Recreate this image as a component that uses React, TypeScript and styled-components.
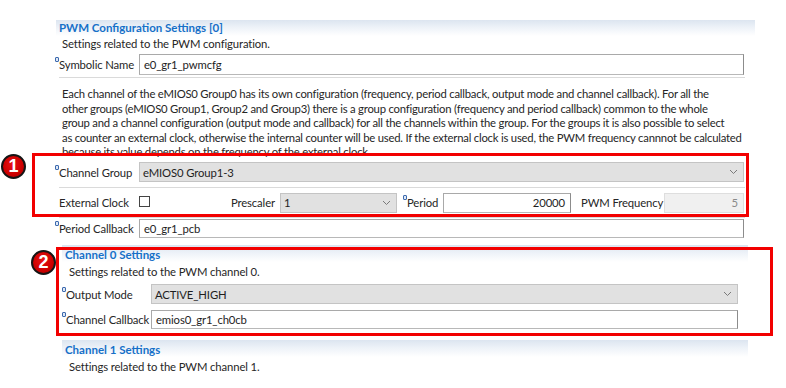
import React from "react";
import styled, { createGlobalStyle } from "styled-components";

const GlobalStyle = createGlobalStyle`
  html, body { margin: 0; padding: 0; background: #ffffff; }
  body {
    font-family: Lato, "Open Sans", sans-serif;
    font-size: 11.3px;
    letter-spacing: -0.12px;
    color: #262626;
  }
`;

const Page = styled.div`
  width: 786px;
  height: 388px;
  overflow: hidden;
  box-sizing: border-box;
  padding: 20px 0 0 56px;
`;

const SectionHeader = styled.div<{ $width: number; $padTop: number; $height: number }>`
  width: ${(p) => p.$width}px;
  height: ${(p) => p.$height}px;
  box-sizing: border-box;
  padding: ${(p) => p.$padTop}px 0 0 3px;
  background: linear-gradient(to bottom, #dce5f0 0%, #edf2f8 45%, #ffffff 100%);
  color: #1670c8;
  font-weight: 700;
  font-size: 11.5px;
  letter-spacing: 0;
  line-height: 13px;
  white-space: nowrap;
`;

const Desc = styled.div<{ $indent: number; $height: number }>`
  padding-left: ${(p) => p.$indent}px;
  height: ${(p) => p.$height}px;
  line-height: ${(p) => p.$height}px;
  white-space: nowrap;
`;

const Row = styled.div<{ $height: number; $sep?: boolean; $width: number; $indent: number }>`
  display: flex;
  align-items: center;
  margin-left: ${(p) => p.$indent}px;
  width: ${(p) => p.$width}px;
  height: ${(p) => p.$height}px;
  border-bottom: ${(p) => (p.$sep ? "1px solid #dadada" : "none")};
`;

const Label = styled.div<{ $width: number }>`
  position: relative;
  flex: 0 0 auto;
  width: ${(p) => p.$width}px;
  white-space: nowrap;
`;

const Marker = styled.span`
  position: absolute;
  left: -4px;
  top: -1px;
  width: 4px;
  height: 5px;
  border: 1px solid #3d6aae;
  border-radius: 1px;
  box-sizing: border-box;
  background: #dfe8f5;
`;

const TextBox = styled.div<{ $width: number; $height: number; $right?: boolean }>`
  flex: 0 0 auto;
  width: ${(p) => p.$width}px;
  height: ${(p) => p.$height}px;
  box-sizing: border-box;
  border: 1px solid #a9a9a9;
  border-right-color: #8c8c8c;
  border-bottom-color: #b8b8b8;
  background: #ffffff;
  color: #1e1e1e;
  display: flex;
  align-items: center;
  justify-content: ${(p) => (p.$right ? "flex-end" : "flex-start")};
  padding: 0 5px 0 4px;
  white-space: nowrap;
`;

const ReadOnlyBox = styled(TextBox)`
  background: #f0f0f0;
  border: 1px solid #dedede;
  color: #8a8a8a;
`;

const SelectBox = styled.div<{ $width: number; $height: number }>`
  flex: 0 0 auto;
  width: ${(p) => p.$width}px;
  height: ${(p) => p.$height}px;
  box-sizing: border-box;
  border: 1px solid #c4c4c4;
  background: #e1e1e1;
  color: #1e1e1e;
  display: flex;
  align-items: center;
  justify-content: space-between;
  padding: 0 5px 0 3px;
  white-space: nowrap;
`;

const Check = styled.div`
  flex: 0 0 auto;
  width: 11px;
  height: 11px;
  box-sizing: border-box;
  border: 1px solid #444444;
  background: #ffffff;
  margin-top: -3px;
`;

const Cell = styled.div<{ $width: number; $align: "left" | "right"; $pad: number }>`
  position: relative;
  flex: 0 0 auto;
  width: ${(p) => p.$width}px;
  box-sizing: border-box;
  text-align: ${(p) => p.$align};
  padding: ${(p) => (p.$align === "right" ? `0 ${p.$pad}px 0 0` : `0 0 0 ${p.$pad}px`)};
  white-space: nowrap;
`;

const InlineMarker = styled.span`
  position: relative;
  display: inline-block;
  width: 0;
  height: 0;
  vertical-align: top;
`;

const Paragraph = styled.div`
  margin: 9px 0 0 6px;
  height: 70px;
  overflow: hidden;
  line-height: 14.5px;
  letter-spacing: -0.22px;
  white-space: nowrap;
`;

const Annotated = styled.div`
  position: relative;
`;

const Frame = styled.div<{ $left: number; $top: number; $width: number; $height: number }>`
  position: absolute;
  left: ${(p) => p.$left}px;
  top: ${(p) => p.$top}px;
  width: ${(p) => p.$width}px;
  height: ${(p) => p.$height}px;
  box-sizing: border-box;
  border: 3px solid #f20000;
  pointer-events: none;
`;

const Badge = styled.div<{ $left: number; $top: number }>`
  position: absolute;
  left: ${(p) => p.$left}px;
  top: ${(p) => p.$top}px;
  width: 25px;
  height: 25px;
  box-sizing: border-box;
  border-radius: 50%;
  border: 2px solid #151515;
  background: radial-gradient(circle at 45% 40%, #e81212 0%, #cc0000 60%, #9a0000 100%);
  color: #ffffff;
  font-family: "Liberation Sans", Arial, sans-serif;
  font-weight: 700;
  font-size: 18px;
  letter-spacing: 0;
  line-height: 21px;
  text-align: center;
`;

const ChannelSection = styled.div<{ $top: number }>`
  position: relative;
  margin: ${(p) => p.$top}px 0 0 6px;
  width: 686px;
`;

const Chevron = () => (
  <svg width="9" height="6" viewBox="0 0 9 6">
    <polyline points="1,1 4.5,4.5 8,1" fill="none" stroke="#7a7a7a" strokeWidth="1" />
  </svg>
);

const MarkedLabel: React.FC<{ width: number; children: React.ReactNode }> = ({ width, children }) => (
  <Label $width={width}>
    <Marker />
    {children}
  </Label>
);

const paragraphLines = [
  "Each channel of the eMIOS0 Group0 has its own configuration (frequency, period callback, output mode and channel callback). For all the",
  "other groups (eMIOS0 Group1, Group2 and Group3) there is a group configuration (frequency and period callback) common to the whole",
  "group and a channel configuration (output mode and callback) for all the channels within the group. For the groups it is also possible to select",
  "as counter an external clock, otherwise the internal counter will be used. If the external clock is used, the PWM frequency cannnot be calculated",
  "because its value depends on the frequency of the external clock.",
];

export default function App() {
  return (
    <>
      <GlobalStyle />
      <Page>
        <SectionHeader $width={699} $height={16} $padTop={1}>
          PWM Configuration Settings [0]
        </SectionHeader>
        <Desc $indent={6} $height={16}>
          Settings related to the PWM configuration.
        </Desc>
        <Row $indent={3} $width={686} $height={25} $sep>
          <MarkedLabel width={80}>Symbolic Name</MarkedLabel>
          <TextBox $width={605} $height={21}>e0_gr1_pwmcfg</TextBox>
        </Row>

        <Paragraph>
          {paragraphLines.map((l) => (
            <div key={l}>{l}</div>
          ))}
        </Paragraph>

        <Annotated>
          <Row $indent={3} $width={686} $height={30} $sep>
            <MarkedLabel width={80}>Channel Group</MarkedLabel>
            <SelectBox $width={605} $height={20}>
              <span>eMIOS0 Group1-3</span>
              <Chevron />
            </SelectBox>
          </Row>
          <Row $indent={3} $width={686} $height={29} $sep>
            <Label $width={80}>External Clock</Label>
            <Check />
            <Cell $width={130} $align="right" $pad={5}>Prescaler</Cell>
            <SelectBox $width={117} $height={20}>
              <span>1</span>
              <Chevron />
            </SelectBox>
            <Cell $width={46} $align="left" $pad={10}>
              <InlineMarker>
                <Marker />
              </InlineMarker>
              Period
            </Cell>
            <TextBox $width={128} $height={20} $right>20000</TextBox>
            <Cell $width={93} $align="left" $pad={10}>PWM Frequency</Cell>
            <ReadOnlyBox $width={80} $height={20} $right>5</ReadOnlyBox>
          </Row>
          <Frame $left={-24} $top={-4} $width={717} $height={64} />
          <Badge $left={-55} $top={-3}>1</Badge>
        </Annotated>

        <Row $indent={3} $width={686} $height={21}>
          <MarkedLabel width={80}>Period Callback</MarkedLabel>
          <TextBox $width={605} $height={19}>e0_gr1_pcb</TextBox>
        </Row>

        <ChannelSection $top={6}>
          <SectionHeader $width={686} $height={17} $padTop={3}>
            Channel 0 Settings
          </SectionHeader>
          <Desc $indent={7} $height={20}>
            Settings related to the PWM channel 0.
          </Desc>
          <Row $indent={4} $width={672} $height={24}>
            <MarkedLabel width={85}>Output Mode</MarkedLabel>
            <SelectBox $width={587} $height={20}>
              <span>ACTIVE_HIGH</span>
              <Chevron />
            </SelectBox>
          </Row>
          <Row $indent={4} $width={672} $height={26}>
            <MarkedLabel width={85}>Channel Callback</MarkedLabel>
            <TextBox $width={587} $height={19}>emios0_gr1_ch0cb</TextBox>
          </Row>
          <Frame $left={-6} $top={2} $width={717} $height={89} />
          <Badge $left={-31} $top={5}>2</Badge>
        </ChannelSection>

        <ChannelSection $top={8}>
          <SectionHeader $width={686} $height={17} $padTop={3}>
            Channel 1 Settings
          </SectionHeader>
          <Desc $indent={7} $height={19}>
            Settings related to the PWM channel 1.
          </Desc>
        </ChannelSection>
      </Page>
    </>
  );
}
